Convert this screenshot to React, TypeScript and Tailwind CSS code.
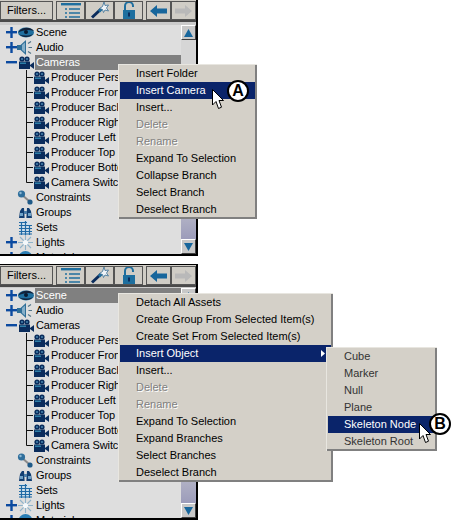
const BLUE = "#0b4aa0";
const NAVY = "#0a2c5c";
const TEAL = "#1f6f9f";

function Expander({ kind }: { kind?: "plus" | "minus" }) {
  return (
    <svg width="11" height="11" viewBox="0 0 11 11" className="ml-[6px] shrink-0">
      {kind && <rect x="0" y="4" width="11" height="2.4" fill={BLUE} />}
      {kind === "plus" && <rect x="4.3" y="0" width="2.4" height="11" fill={BLUE} />}
    </svg>
  );
}

function SceneIcon() {
  return (
    <svg width="17" height="13" viewBox="0 0 17 13">
      <ellipse cx="9" cy="6.5" rx="8" ry="5" fill={TEAL} />
      <path d="M1 6.5C4 1 13 0 17 5 12 3 6 4 1 6.5Z" fill="#12233c" />
      <path d="M2 8.5C7 12 13 12 16 8 12 10 7 10 2 8.5Z" fill="#12233c" />
      <circle cx="9" cy="6" r="2" fill="#0a1a30" />
    </svg>
  );
}

function AudioIcon() {
  return (
    <svg width="17" height="15" viewBox="0 0 17 15">
      <path d="M0 5h3.5L9 0v15L3.5 10H0Z" fill="#2f6f98" />
      <path d="M5 5 8 2.5v10L5 10Z" fill="#86afc9" />
      <path d="M11 3.5 14 1.5M11.5 7.5h3.5M11 11.5l3 2" stroke="#4f7388" strokeWidth="1.2" fill="none" />
    </svg>
  );
}

function CameraIcon() {
  return (
    <svg width="16" height="14" viewBox="0 0 16 14">
      <circle cx="4" cy="3" r="2.6" fill={NAVY} />
      <circle cx="9" cy="3" r="2.6" fill={NAVY} />
      <circle cx="4" cy="3" r="0.9" fill="#4f8fb8" />
      <circle cx="9" cy="3" r="0.9" fill="#4f8fb8" />
      <rect x="1" y="5.5" width="11" height="7.5" fill={NAVY} />
      <rect x="2" y="6.5" width="6" height="1.5" fill="#2d7fa8" />
      <path d="M12 9 16 6v7l-4-3Z" fill={NAVY} />
    </svg>
  );
}

function ConstraintsIcon() {
  return (
    <svg width="17" height="15" viewBox="0 0 17 15">
      <path d="M4 4 12 11" stroke="#8a8a8a" strokeWidth="2" />
      <circle cx="4.5" cy="4" r="3.6" fill="#2f6f9c" />
      <circle cx="3.5" cy="3" r="1.2" fill="#8db8d4" />
      <circle cx="13" cy="12" r="2.6" fill="#1f5a88" />
    </svg>
  );
}

function GroupsIcon() {
  return (
    <svg width="17" height="14" viewBox="0 0 17 14">
      <path d="M2 12 3 5 5 2h2l.6 10Z" fill="#123f72" />
      <path d="M15 12 14 5 12 2h-2l-.6 10Z" fill="#123f72" />
      <rect x="7" y="5" width="3" height="3" fill="#4d7fa8" />
      <rect x="3" y="7" width="3" height="3" fill="#6fa3c8" />
      <rect x="11" y="7" width="3" height="3" fill="#6fa3c8" />
    </svg>
  );
}

function SetsIcon() {
  return (
    <svg width="17" height="14" viewBox="0 0 17 14">
      <rect x="3" y="0" width="10" height="14" fill="#cfe0ec" />
      <path d="M2 1.5h8M2 4.5h13M2 7.5h13M2 10.5h13M2 13h13" stroke="#1f6aa5" strokeWidth="1.2" />
      <path d="M4.5 2v12M8.5 0v14M12.5 4v10" stroke="#1f6aa5" strokeWidth="1.2" />
    </svg>
  );
}

function LightsIcon() {
  return (
    <svg width="17" height="15" viewBox="0 0 17 15">
      <path d="M8.5 0v15M1 7.5h15M3 2l11 11M14 2 3 13" stroke="#8fb3ca" strokeWidth="1.1" />
      <circle cx="8.5" cy="7.5" r="2.6" fill="#f4f8fb" />
    </svg>
  );
}

function MaterialsIcon() {
  return (
    <svg width="17" height="15" viewBox="0 0 17 15">
      <circle cx="8.5" cy="8" r="7" fill="#2b7fb5" />
    </svg>
  );
}

function Connector({ last }: { last?: boolean }) {
  return (
    <svg width="7" height="15" viewBox="0 0 7 15" className="ml-[26px] shrink-0">
      <path d={last ? "M.5 0V7.5H7" : "M.5 0V15M.5 7.5H7"} stroke="#111" fill="none" />
    </svg>
  );
}

function TreeRow({
  label,
  icon,
  expander,
  selected,
}: {
  label: string;
  icon: React.ReactNode;
  expander?: "plus" | "minus";
  selected?: boolean;
}) {
  return (
    <div className="flex h-[15px] items-center">
      <Expander kind={expander} />
      <span className="flex w-[17px] shrink-0 justify-center">{icon}</span>
      <span
        className={`ml-[1px] flex h-[15px] flex-1 items-center pl-[1px] whitespace-nowrap ${
          selected ? "bg-[#808080] text-white" : "text-black"
        }`}
      >
        {label}
      </span>
    </div>
  );
}

const CAMERAS = [
  "Producer Perspective",
  "Producer Front",
  "Producer Back",
  "Producer Right",
  "Producer Left",
  "Producer Top",
  "Producer Bottom",
  "Camera Switcher",
];

function ToolButton({ width, children }: { width: string; children: React.ReactNode }) {
  return (
    <div className={`flex h-[19px] items-center justify-center border border-[#555] bg-[#d0cdc6] ${width}`}>
      {children}
    </div>
  );
}

function Toolbar({ height }: { height: string }) {
  return (
    <div className={`flex shrink-0 flex-col bg-[#cbcbcb] ${height}`}>
      <div className="flex h-[20px] items-start bg-[#d0cdc6] pt-[1px]">
        <div className="flex h-[19px] w-[54px] items-center justify-center border border-[#555] text-[11px] text-black">
          Filters...
        </div>
        <div className="ml-[3px] flex">
          <ToolButton width="w-[29px]">
            <svg width="20" height="16" viewBox="0 0 20 16">
              <rect x="0" y="0" width="20" height="2.4" fill={TEAL} />
              <path d="M4 6h2M8 6h11M4 10h2M8 10h11M4 14h2M8 14h11" stroke={TEAL} strokeWidth="1.6" />
            </svg>
          </ToolButton>
          <ToolButton width="w-[29px]">
            <svg width="20" height="17" viewBox="0 0 18 17">
              <path d="M1 15.5 10 7" stroke={NAVY} strokeWidth="3" />
              <path d="M7 8.5 10 5.5l2 2-3 3Z" fill={TEAL} />
              <path d="M13 0l1 3.5 3.5-.5-2 3 2 3-3.5-1-1.5 2.5-1-3-3-1 3-2Z" fill="#eef3f7" stroke="#3a6f96" strokeWidth="0.8" />
            </svg>
          </ToolButton>
          <ToolButton width="w-[29px]">
            <svg width="14" height="17" viewBox="0 0 14 17">
              <path d="M3 8V4a4 4 0 0 1 8 0v1" stroke={TEAL} strokeWidth="2" fill="none" />
              <rect x="1" y="8" width="12" height="9" fill="#1e6f9f" />
              <rect x="6" y="10.5" width="2" height="4" fill="#0a2c5c" />
            </svg>
          </ToolButton>
        </div>
        <div className="ml-[3px] flex">
          <ToolButton width="w-[25px]">
            <svg width="17" height="12" viewBox="0 0 17 12">
              <path d="M0 6 7 0v3.5h10v5H7V12Z" fill="#17669c" />
            </svg>
          </ToolButton>
          <ToolButton width="w-[25px]">
            <svg width="17" height="12" viewBox="0 0 17 12">
              <path d="M17 6 10 0v3.5H0v5h10V12Z" fill="#b9b9b9" />
            </svg>
          </ToolButton>
        </div>
      </div>
      <div className="h-[2px] bg-[#4a4a4a]" />
    </div>
  );
}

function ScrollButton({ up }: { up?: boolean }) {
  return (
    <div className="flex h-[15px] w-[15px] items-center justify-center border border-t-white border-l-white border-r-[#404040] border-b-[#404040] bg-[#c8c8c8]">
      <svg width="9" height="8" viewBox="0 0 9 8">
        <path d={up ? "M4.5 0 9 8H0Z" : "M0 0H9L4.5 8Z"} fill="#17669c" />
      </svg>
    </div>
  );
}

function Panel({ top }: { top?: boolean }) {
  return (
    <div className={`flex h-[256px] w-[198px] flex-col overflow-hidden border-r-2 border-b-2 border-black bg-[#dedede] ${top ? "border-t" : ""}`}>
      <Toolbar height={top ? "h-[23px]" : "h-[25px]"} />
      <div className="flex min-h-0 flex-1">
        <div className="min-w-0 flex-1 overflow-hidden tracking-[-0.1px]">
          <TreeRow label="Scene" icon={<SceneIcon />} expander="plus" selected={top} />
          <TreeRow label="Audio" icon={<AudioIcon />} expander="plus" />
          <TreeRow label="Cameras" icon={<CameraIcon />} expander="minus" selected={!top} />
          {CAMERAS.map((name, i) => (
            <div key={name} className="flex h-[15px] items-center whitespace-nowrap">
              <Connector last={i === CAMERAS.length - 1} />
              <span className="flex w-[16px] shrink-0 justify-center">
                <CameraIcon />
              </span>
              <span className="ml-[2px]">{name}</span>
            </div>
          ))}
          <TreeRow label="Constraints" icon={<ConstraintsIcon />} />
          <TreeRow label="Groups" icon={<GroupsIcon />} />
          <TreeRow label="Sets" icon={<SetsIcon />} />
          <TreeRow label="Lights" icon={<LightsIcon />} expander="plus" />
          <TreeRow label="Materials" icon={<MaterialsIcon />} expander="plus" />
        </div>
        <div className="flex w-[15px] shrink-0 flex-col">
          <ScrollButton up />
          <div className="flex-1 bg-gradient-to-b from-[#d6d6d6] from-70% to-[#9c9cba]" />
          <ScrollButton />
        </div>
      </div>
    </div>
  );
}

type Item = { label: string; active?: boolean; disabled?: boolean; arrow?: boolean };

function Menu({ items, position, muted }: { items: Item[]; position: string; muted?: boolean }) {
  return (
    <div className={`absolute bg-[#d4d0c8] px-[2px] py-[1px] shadow-[inset_1px_1px_0_#e8e6e0,inset_-2px_-2px_0_#808080] ${position}`}>
      {items.map((item) => (
        <div
          key={item.label}
          className={`relative flex h-[17px] items-center pl-[16px] whitespace-nowrap ${
            item.active
              ? "bg-[#0a246a] text-white"
              : item.disabled
                ? "text-[#808080] [text-shadow:1px_1px_0_#fff]"
                : muted
                  ? "text-[#333]"
                  : "text-black"
          }`}
        >
          {item.label}
          {item.arrow && (
            <svg width="4" height="7" viewBox="0 0 4 7" className="absolute top-[5px] right-[6px]">
              <path d="M0 0 4 3.5 0 7Z" fill="#fff" />
            </svg>
          )}
        </div>
      ))}
    </div>
  );
}

function Cursor({ position }: { position: string }) {
  return (
    <svg width="12" height="20" viewBox="0 0 12 20" className={`absolute ${position}`}>
      <path d="M.5.5V16L4 12.5 6.5 19.5 9.5 18.2 7 11.5H11.5Z" fill="#fff" stroke="#000" />
    </svg>
  );
}

function Badge({ label, position }: { label: string; position: string }) {
  return (
    <div className={`absolute flex h-[22px] w-[22px] items-center justify-center rounded-full border-[2.5px] border-black bg-white text-[16px] leading-none font-bold text-black ${position}`}>
      {label}
    </div>
  );
}

const MENU_A: Item[] = [
  { label: "Insert Folder" },
  { label: "Insert Camera", active: true },
  { label: "Insert..." },
  { label: "Delete", disabled: true },
  { label: "Rename", disabled: true },
  { label: "Expand To Selection" },
  { label: "Collapse Branch" },
  { label: "Select Branch" },
  { label: "Deselect Branch" },
];

const MENU_B: Item[] = [
  { label: "Detach All Assets" },
  { label: "Create Group From Selected Item(s)" },
  { label: "Create Set From Selected Item(s)" },
  { label: "Insert Object", active: true, arrow: true },
  { label: "Insert..." },
  { label: "Delete", disabled: true },
  { label: "Rename", disabled: true },
  { label: "Expand To Selection" },
  { label: "Expand Branches" },
  { label: "Select Branches" },
  { label: "Deselect Branch" },
];

const SUBMENU: Item[] = [
  { label: "Cube" },
  { label: "Marker" },
  { label: "Null" },
  { label: "Plane" },
  { label: "Skeleton Node", active: true },
  { label: "Skeleton Root" },
];

export default function App() {
  return (
    <div className="relative flex h-[520px] w-[451px] flex-col gap-[8px] overflow-hidden bg-white font-['Liberation_Sans',Arial,sans-serif] text-[11px] text-black">
      <Panel />
      <Panel top />

      <Menu items={MENU_A} position="top-[64px] left-[118px] w-[139px]" />
      <Cursor position="top-[89px] left-[212px]" />
      <Badge label="A" position="top-[80px] left-[227px]" />

      <Menu items={MENU_B} position="top-[293px] left-[118px] w-[215px]" />
      <Menu items={SUBMENU} position="top-[347px] left-[326px] w-[111px]" muted />
      <Cursor position="top-[423px] left-[419px]" />
      <Badge label="B" position="top-[413px] left-[429px]" />
    </div>
  );
}
